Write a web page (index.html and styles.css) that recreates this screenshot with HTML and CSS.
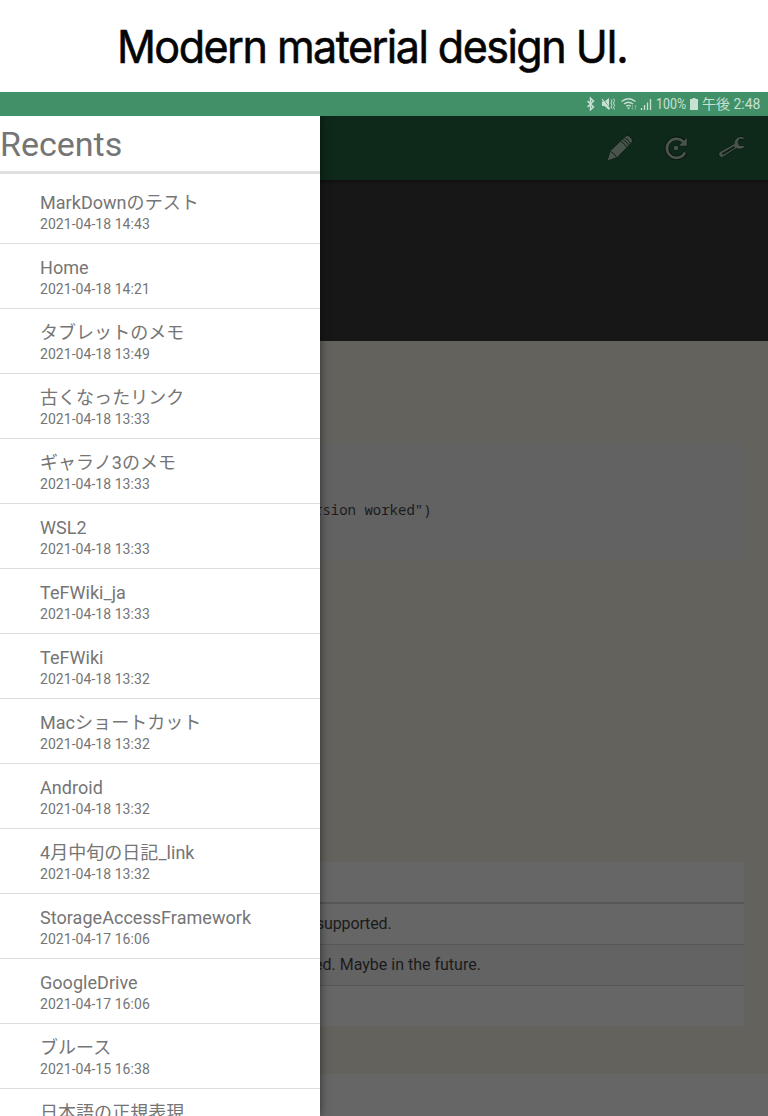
FILE: index.html
```html
<!DOCTYPE html>
<html lang="ja">
<head>
<meta charset="utf-8">
<title>Modern material design UI.</title>
<link rel="stylesheet" href="styles.css">
</head>
<body>
<h1 class="headline"><span class="headline-text">Modern material design UI.</span></h1>
<div class="statusbar">
<svg class="status-icons" width="70" height="24" viewBox="0 0 70 24">
<path d="M3.500 9l6 6-3 2.700V6.300l3 2.700-6 6" fill="none" stroke="#c8e0d4" stroke-width="1.500"/>
<path d="M18 9.500h2.500L25 6v12l-4.500-4H18z" fill="#c8e0d4"/>
<path d="M19 6.500l7.500 11" stroke="#429067" stroke-width="1"/>
<path d="M18 7l8 10" fill="none" stroke="#c8e0d4" stroke-width="1.200"/>
<path d="M27 7.500l1 1.500-1 2 1 2-1 2 1 1.500M29.500 6.500l1 2-1 2.500 1 2.500-1 2 1 2" fill="none" stroke="#c8e0d4" stroke-width="1"/>
<path d="M37.500 9.500q7-5.500 14 0M40 12q4.500-3.500 9 0M42.200 14.300q2.300-1.800 4.600 0" fill="none" stroke="#c8e0d4" stroke-width="1.400"/>
<path d="M43 15.500h3L44.500 17.500z" fill="#c8e0d4"/>
<path d="M48.500 13v4m-1-1l1 1.500 1-1.500M51.500 17.500v-4m-1 1l1-1.500 1 1.500" fill="none" stroke="#73b18f"/>
<path d="M57.500 16v2M60.500 13v5M63.500 10.500V18M66.500 7v11" stroke="#c8e0d4" stroke-width="1.300"/>
</svg>
<span class="status-text battery-text">100%</span>
<svg class="battery" width="8" height="12" viewBox="0 0 8 12"><path d="M2.500 0h3v1H8v11H0V1h2.500z" fill="#c8e0d4"/></svg>
<span class="status-text clock">午後 2:48</span>
</div>
<div class="app">
<aside class="drawer">
<h2 class="drawer-title">Recents</h2>
<ul class="recents">
<li class="recent"><span class="name">MarkDownのテスト</span><span class="date">2021-04-18 14:43</span></li>
<li class="recent"><span class="name">Home</span><span class="date">2021-04-18 14:21</span></li>
<li class="recent"><span class="name">タブレットのメモ</span><span class="date">2021-04-18 13:49</span></li>
<li class="recent"><span class="name">古くなったリンク</span><span class="date">2021-04-18 13:33</span></li>
<li class="recent"><span class="name">ギャラノ3のメモ</span><span class="date">2021-04-18 13:33</span></li>
<li class="recent"><span class="name">WSL2</span><span class="date">2021-04-18 13:33</span></li>
<li class="recent"><span class="name">TeFWiki_ja</span><span class="date">2021-04-18 13:33</span></li>
<li class="recent"><span class="name">TeFWiki</span><span class="date">2021-04-18 13:32</span></li>
<li class="recent"><span class="name">Macショートカット</span><span class="date">2021-04-18 13:32</span></li>
<li class="recent"><span class="name">Android</span><span class="date">2021-04-18 13:32</span></li>
<li class="recent"><span class="name">4月中旬の日記_link</span><span class="date">2021-04-18 13:32</span></li>
<li class="recent"><span class="name">StorageAccessFramework</span><span class="date">2021-04-17 16:06</span></li>
<li class="recent"><span class="name">GoogleDrive</span><span class="date">2021-04-17 16:06</span></li>
<li class="recent"><span class="name">ブルース</span><span class="date">2021-04-15 16:38</span></li>
<li class="recent"><span class="name">日本語の正規表現</span></li>
</ul>
</aside>
<main class="page">
<div class="toolbar">
<svg class="tool" width="32" height="32" viewBox="0 0 32 32">
<path class="glyph" d="M3.500 28.500L6.500 19 20.500 5.500c1.500-1.700 3.500-2.200 5.300-.5l1.200 1.200c1.700 1.800 1.200 3.800-.5 5.300L13 25.300z"/>
<path class="cut" d="M6.500 19.500q4 1.500 6 6M16.500 9.500q4.500 1.500 6 6M18.500 7.500q4.500 1.500 6 6M20.300 5.700q4.500 1.500 6 6"/>
</svg>
<svg class="tool" width="32" height="32" viewBox="0 0 32 32">
<path class="ring-edge" d="M25.300 20.500A9.700 9.700 0 1 1 23.500 9.500"/>
<path class="glyph" d="M26.800 5.800v7.900h-8l2.800-2.700 1.700-1.500z"/>
<path class="ring" d="M25 20.500A9.500 9.500 0 1 1 23.300 9.800"/>
<circle class="glyph" cx="16" cy="16" r="2.300"/>
</svg>
<svg class="tool" width="32" height="32" viewBox="0 0 32 32">
<path class="glyph" d="M29 6.800h-5.500l-2 3 1.500 4 6 .2c-2 2.800-5.500 3.500-8.500 2L7.200 24.600c-3.300 1.500-5.500-3-3-4.700L18.500 12c0-4.500 3-7 6.800-7 1.500 0 2.700.8 3.700 1.800z"/>
<path class="slot" d="M7 21.700L17.800 15.400"/>
</svg>
</div>
<div class="band"></div>
<div class="wiki">
<pre class="code">rsion worked")</pre>
<div class="table">
<div class="row head"></div>
<div class="row">supported.</div>
<div class="row even">ed. Maybe in the future.</div>
<div class="row"></div>
</div>
</div>
</main>
</div>
</body>
</html>
```
FILE: styles.css
```css
* { box-sizing: border-box; }
body { margin: 0; width: 768px; height: 1116px; overflow: hidden; background: #fff; font-family: Roboto, "Noto Sans CJK JP", sans-serif; }
.headline { margin: 0; height: 92px; padding-left: 117px; font: 400 45px/93px Inter, sans-serif; color: #050505; white-space: nowrap; }
.headline-text { display: inline-block; letter-spacing: -1.6px; transform: scaleX(.957); transform-origin: left center; -webkit-text-stroke: .6px #050505; }
.statusbar { height: 24px; background: #429067; display: flex; align-items: center; padding-left: 584px; color: #c8e0d4; font-size: 14px; line-height: 24px; white-space: nowrap; }
.status-icons { flex: none; }
.status-text { flex: none; transform-origin: left center; }
.battery-text { width: 36px; margin-left: 2px; transform: scaleX(.89); }
.battery { flex: none; margin-left: -2px; }
.clock { margin-left: 4px; }
.app { display: flex; height: 1000px; overflow: hidden; }
.drawer { flex: none; width: 320px; background: #fff; color: #757575; box-shadow: 0 0 9px rgba(0, 0, 0, .55); z-index: 1; clip-path: inset(0 -20px 0 0); }
.drawer-title { margin: 0; height: 58px; border-bottom: 3px solid #e0e0e0; font-size: 34px; font-weight: 400; line-height: 57px; }
.recents { list-style: none; margin: 0; padding: 5px 0 0; }
.recent { height: 65px; padding: 12px 0 0 40px; border-bottom: 1px solid #dedede; display: flex; flex-direction: column; }
.name { font-size: 18px; line-height: 24px; height: 24px; white-space: nowrap; letter-spacing: .04px; }
.date { font-size: 14px; line-height: 18px; letter-spacing: .05px; }
.page { flex: 1; min-width: 0; display: flex; flex-direction: column; background: #666; overflow: hidden; }
.toolbar { flex: none; height: 64px; background: #0e2819; display: flex; align-items: center; justify-content: flex-end; gap: 24px; padding-right: 20px; }
.tool { flex: none; }
.glyph { fill: #49544d; stroke: #07150c; stroke-width: 1; paint-order: stroke; }
.cut { fill: none; stroke: #102518; stroke-width: 1; }
.slot { fill: none; stroke: #102518; stroke-width: 2.2; stroke-linecap: round; }
.ring { fill: none; stroke: #49544d; stroke-width: 2.8; }
.ring-edge { fill: none; stroke: #07150c; stroke-width: 4.4; }
.band { flex: none; height: 161px; background: linear-gradient(#101010, #171717 5px); }
.wiki { flex: none; height: 733px; background: #64625d; padding: 101px 24px 0 0; color: #1b1b1b; }
.code { margin: 0; height: 118px; background: #626262; padding: 59px 0 0; text-indent: -6px; font: 14px/18px "Noto Sans Mono", "DejaVu Sans Mono", monospace; }
.table { margin-top: 302px; background: #666; font-size: 16px; }
.row { height: 41px; line-height: 40px; border-bottom: 1px solid #575757; text-indent: -4px; letter-spacing: -.15px; }
.row.head { height: 42px; border-bottom-width: 2px; }
.row.even { background: #636363; text-indent: -6px; letter-spacing: 0; }
.row:last-child { border: 0; height: 40px; }
```
